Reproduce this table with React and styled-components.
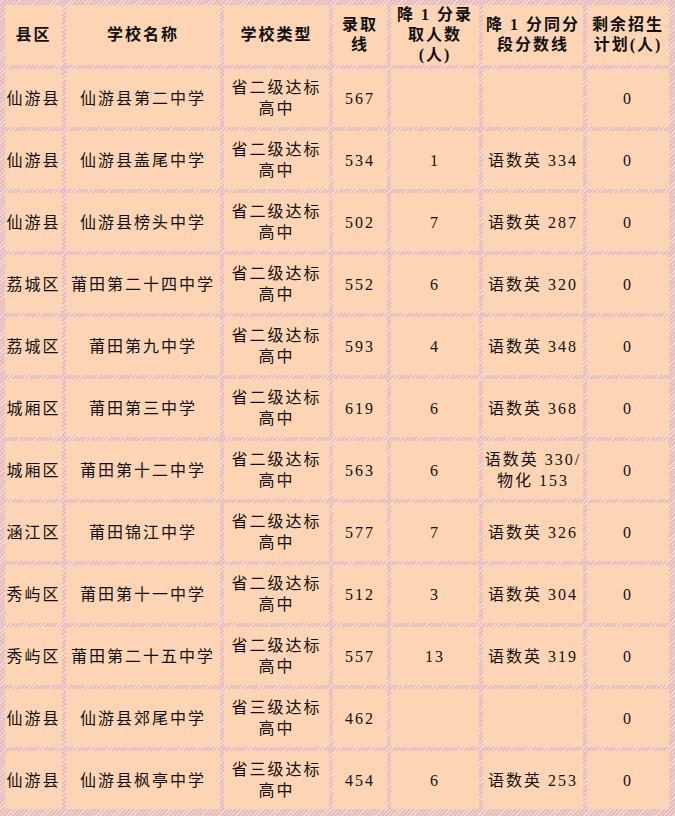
import React from 'react';
import styled, { createGlobalStyle } from 'styled-components';

const GlobalStyle = createGlobalStyle`
  html, body {
    margin: 0;
    padding: 0;
    background: #ffffff;
  }
`;

const Frame = styled.div`
  width: 675px;
  box-sizing: border-box;
  padding: 1px 2px 3px 1px;
  background: repeating-linear-gradient(
    135deg,
    #e6bcbc 0px,
    #e6bcbc 2px,
    #f5dcd8 2px,
    #f5dcd8 3px
  );
`;

const Table = styled.table`
  border-collapse: separate;
  border-spacing: 4px;
  table-layout: fixed;
  width: 672px;
  font-family: "Liberation Serif", "Noto Sans CJK SC", serif;
  font-size: 16px;
  letter-spacing: 2px;
  color: #111;
`;

const HeadCell = styled.th`
  background: #fdd5b5;
  height: 60px;
  padding: 0;
  font-weight: bold;
  line-height: 20px;
  text-align: center;
  vertical-align: middle;
`;

const Cell = styled.td`
  background: #fdd5b5;
  height: 58px;
  padding: 0;
  font-weight: normal;
  line-height: 21px;
  text-align: center;
  vertical-align: middle;
  white-space: nowrap;
`;

const widths = [57, 154, 105, 54, 88, 100, 82];

const rows = [
  ['仙游县', '仙游县第二中学', '省二级', '567', '', ''],
  ['仙游县', '仙游县盖尾中学', '省二级', '534', '1', '语数英 334'],
  ['仙游县', '仙游县榜头中学', '省二级', '502', '7', '语数英 287'],
  ['荔城区', '莆田第二十四中学', '省二级', '552', '6', '语数英 320'],
  ['荔城区', '莆田第九中学', '省二级', '593', '4', '语数英 348'],
  ['城厢区', '莆田第三中学', '省二级', '619', '6', '语数英 368'],
  ['城厢区', '莆田第十二中学', '省二级', '563', '6', ['语数英 330/', '物化 153']],
  ['涵江区', '莆田锦江中学', '省二级', '577', '7', '语数英 326'],
  ['秀屿区', '莆田第十一中学', '省二级', '512', '3', '语数英 304'],
  ['秀屿区', '莆田第二十五中学', '省二级', '557', '13', '语数英 319'],
  ['仙游县', '仙游县郊尾中学', '省三级', '462', '', ''],
  ['仙游县', '仙游县枫亭中学', '省三级', '454', '6', '语数英 253'],
];

const Lines = ({ lines }) =>
  lines.map((l, i) => (
    <React.Fragment key={i}>
      {i > 0 && <br />}
      {l}
    </React.Fragment>
  ));

const App = () => (
  <>
    <GlobalStyle />
    <Frame>
      <Table>
        <colgroup>
          {widths.map((w, i) => (
            <col key={i} style={{ width: w }} />
          ))}
        </colgroup>
        <thead>
          <tr>
            <HeadCell>县区</HeadCell>
            <HeadCell>学校名称</HeadCell>
            <HeadCell>学校类型</HeadCell>
            <HeadCell><Lines lines={['录取', '线']} /></HeadCell>
            <HeadCell><Lines lines={['降 1 分录', '取人数', '(人)']} /></HeadCell>
            <HeadCell><Lines lines={['降 1 分同分', '段分数线']} /></HeadCell>
            <HeadCell><Lines lines={['剩余招生', '计划(人)']} /></HeadCell>
          </tr>
        </thead>
        <tbody>
          {rows.map((r, i) => (
            <tr key={i}>
              <Cell>{r[0]}</Cell>
              <Cell>{r[1]}</Cell>
              <Cell><Lines lines={[r[2] + '达标', '高中']} /></Cell>
              <Cell>{r[3]}</Cell>
              <Cell>{r[4]}</Cell>
              <Cell>{Array.isArray(r[5]) ? <Lines lines={r[5]} /> : r[5]}</Cell>
              <Cell>0</Cell>
            </tr>
          ))}
        </tbody>
      </Table>
    </Frame>
  </>
);

export default App;
